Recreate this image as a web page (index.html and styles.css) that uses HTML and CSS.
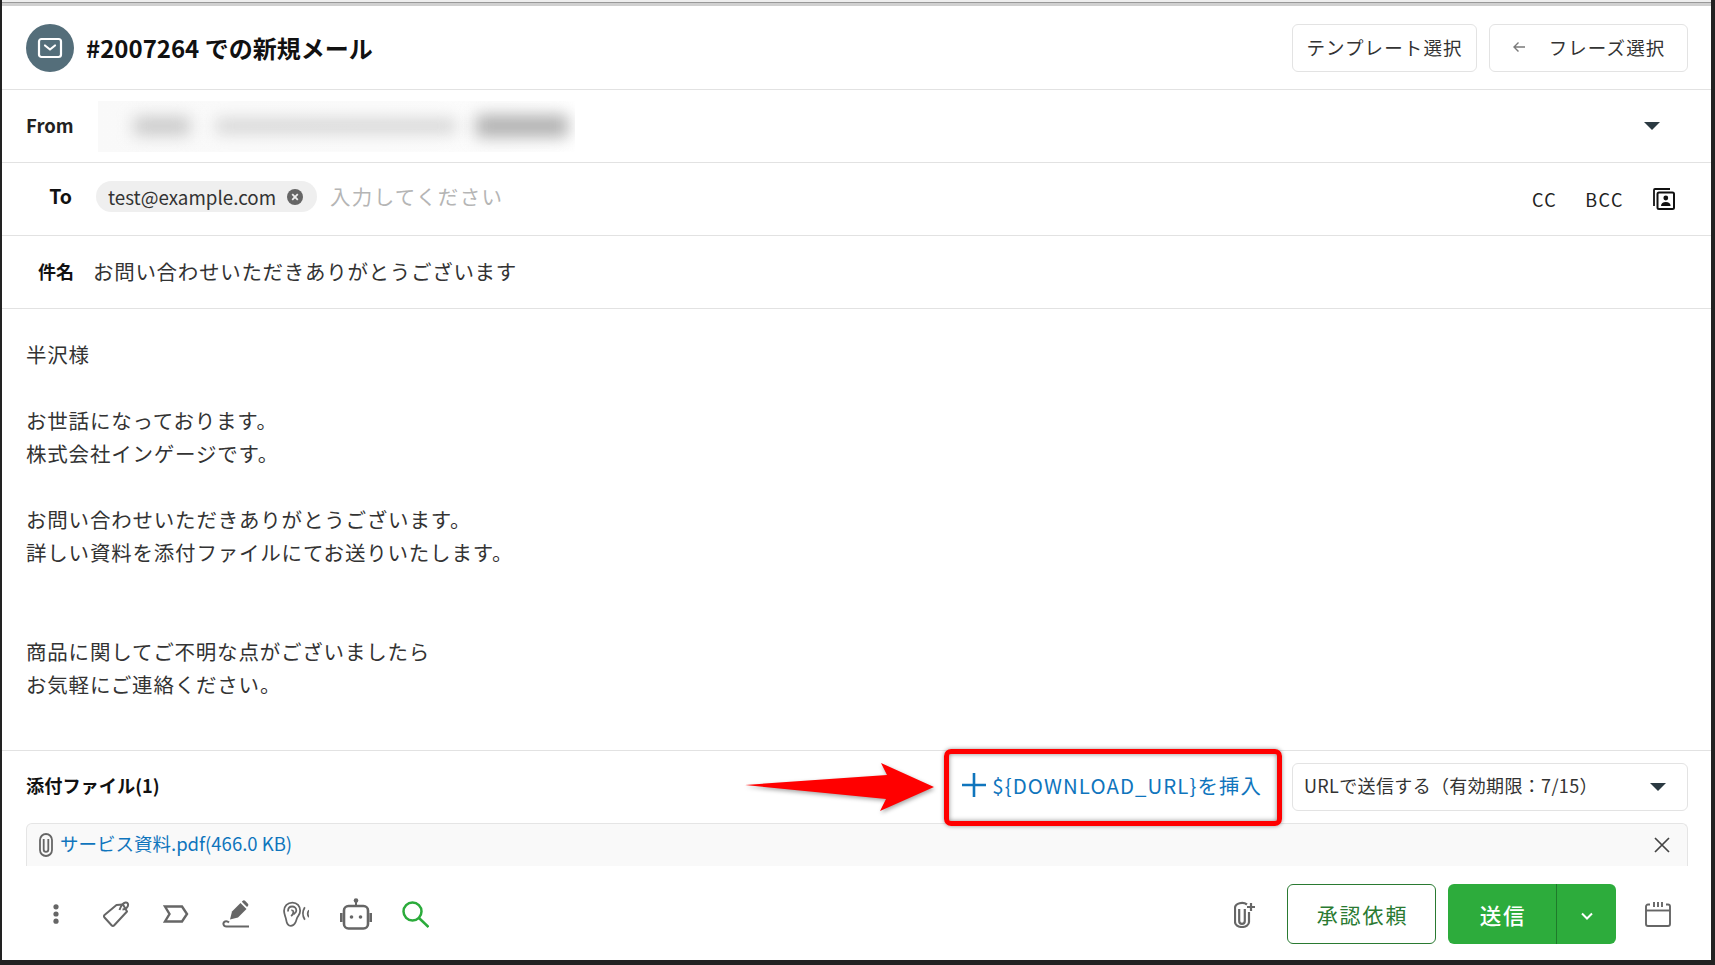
FILE: index.html
```html
<!DOCTYPE html>
<html lang="ja">
<head>
    <meta charset="UTF-8">
    <meta name="viewport" content="width=device-width, initial-scale=1.0">
    <title>新規メール</title>
    <link rel="stylesheet" href="styles.css">
</head>
<body>
    <div class="frame">
        <div class="top-strip"></div>

        <header class="head">
            <div class="head-title">
                <span class="avatar">
                    <svg width="26" height="22" viewBox="0 0 26 22" fill="none" stroke="#fff" stroke-width="2.2" stroke-linejoin="round" stroke-linecap="round">
                        <rect x="2" y="2" width="22" height="18" rx="2.5"/>
                        <path d="M8 8.5l5 4 5-4"/>
                    </svg>
                </span>
                <h1>#2007264 での新規メール</h1>
            </div>
            <div class="head-actions">
                <button class="btn btn-template" type="button"><span>テンプレート選択</span></button>
                <button class="btn btn-phrase" type="button">
                    <svg width="14" height="12" viewBox="0 0 14 12" fill="none" stroke="#7a7a7a" stroke-width="1.4">
                        <path d="M13 6H2M6.5 1.5L2 6l4.5 4.5"/>
                    </svg>
                    <span>フレーズ選択</span>
                </button>
            </div>
        </header>

        <div class="row row-from">
            <label class="row-label label-from">From</label>
            <div class="blurred">
                <span class="blob blob-a"></span>
                <span class="blob blob-b"></span>
                <span class="blob blob-c"></span>
            </div>
            <span class="caret caret-from"></span>
        </div>

        <div class="row row-to">
            <label class="row-label label-to">To</label>
            <span class="chip">
                test@example.com
                <svg width="16" height="16" viewBox="0 0 16 16">
                    <circle cx="8" cy="8" r="8" fill="#666"/>
                    <path d="M5.2 5.2l5.6 5.6M10.8 5.2l-5.6 5.6" stroke="#efefef" stroke-width="1.8"/>
                </svg>
            </span>
            <span class="placeholder">入力してください</span>
            <div class="to-links">
                <span class="to-cc">CC</span>
                <span class="to-bcc">BCC</span>
                <svg width="22" height="22" viewBox="0 0 22 22" fill="none" stroke="#111" stroke-width="1.8">
                    <path d="M1 18V2a1 1 0 0 1 1-1h15"/>
                    <rect x="4.5" y="4.5" width="16.5" height="16.5" rx="1.5" stroke-width="2"/>
                    <circle cx="12.8" cy="10" r="2.4" fill="#111" stroke="none"/>
                    <path d="M8 18c0-2.8 2-4 4.8-4s4.8 1.2 4.8 4z" fill="#111" stroke="none"/>
                </svg>
            </div>
        </div>

        <div class="row row-subject">
            <label class="row-label label-subject">件名</label>
            <span class="subject">お問い合わせいただきありがとうございます</span>
        </div>

        <div class="mail-body">
            <p>半沢様</p>
            <p>&nbsp;</p>
            <p>お世話になっております。</p>
            <p>株式会社インゲージです。</p>
            <p>&nbsp;</p>
            <p>お問い合わせいただきありがとうございます。</p>
            <p>詳しい資料を添付ファイルにてお送りいたします。</p>
            <p>&nbsp;</p>
            <p>&nbsp;</p>
            <p>商品に関してご不明な点がございましたら</p>
            <p>お気軽にご連絡ください。</p>
        </div>

        <div class="attach-row">
            <span class="attach-title">添付ファイル(1)</span>
            <button class="insert-btn" type="button">
                <svg width="24" height="24" viewBox="0 0 24 24" stroke="#0f75bd" stroke-width="2.6">
                    <path d="M12 0v24M0 12h24"/>
                </svg>
                <span>${DOWNLOAD_URL}を挿入</span>
            </button>
            <div class="url-select">
                <span class="url-text">URLで送信する（有効期限：7/15）</span>
                <span class="caret"></span>
            </div>

            <!-- annotation drawn over the screenshot -->
            <svg class="note-arrow" width="200" height="60" viewBox="0 0 200 60">
                <path d="M0 26L142 16L136 4L189 28L135 52L141 40z" fill="#ff0000"/>
            </svg>
            <div class="note-box"></div>
        </div>

        <div class="file-row">
            <svg class="clip" width="14" height="24" viewBox="0 0 14 24" fill="none" stroke="#666" stroke-width="1.8">
                <rect x="1" y="1" width="12" height="22" rx="6"/>
                <path d="M4.7 6v10.500a2.300 2.300 0 0 0 4.600 0V6"/>
            </svg>
            <a class="file-link">サービス資料.pdf(466.0 KB)</a>
            <svg class="file-close" width="16" height="16" viewBox="0 0 16 16" stroke="#444" stroke-width="1.7">
                <path d="M1 1l14 14M15 1L1 15"/>
            </svg>
        </div>

        <footer class="foot">
            <div class="tools">
                <span class="tool">
                    <svg width="6" height="20" viewBox="0 0 6 20" fill="#666">
                        <circle cx="3" cy="2.8" r="2.6"/><circle cx="3" cy="10" r="2.6"/><circle cx="3" cy="17.2" r="2.6"/>
                    </svg>
                </span>
                <span class="tool">
                    <svg width="27" height="27" viewBox="0 0 27 27" fill="none" stroke="#666" stroke-width="2" stroke-linejoin="round">
                        <path d="M1.500 14L13.500 4l6.500-.5 4 7L11 24.500a1.500 1.500 0 0 1-2.200 0L1.500 16.500a1.700 1.700 0 0 1 0-2.500z"/>
                        <path d="M16.500 9c1-3 3.500-7 6-7.500 2.500-.5 3.500 2.500 1.500 5-1 1-2.500 2-4.500 2"/>
                    </svg>
                </span>
                <span class="tool">
                    <svg width="26" height="20" viewBox="0 0 26 20" fill="none" stroke="#666" stroke-width="2.4">
                        <path d="M2 2.500h17l5 7.500-5 7.500H2L6.500 10z"/>
                    </svg>
                </span>
                <span class="tool">
                    <svg width="28" height="28" viewBox="0 0 28 28" fill="none">
                        <path d="M8 19.500l2-8L18.500 3l6 6-8.500 8.500z" fill="#666"/>
                        <path d="M19.800 1.700l.7-.7a2 2 0 0 1 2.800 0l2.400 2.400a2 2 0 0 1 0 2.800l-.7.700z" fill="#666"/>
                        <path d="M27 26.500H4.500C1 26.500.5 22.500 3 21.500c1.500-.5 3 0 4 1" stroke="#666" stroke-width="2"/>
                    </svg>
                </span>
                <span class="tool">
                    <svg width="26" height="27" viewBox="0 0 25 25" fill="none" stroke="#666" stroke-width="1.7">
                        <path d="M1 9C1 4.500 4.500 1 9 1s7.500 3.500 7.500 8c0 3-1.500 4.500-2.500 6-1 1.500-1 3-2 5-1 2-2.500 3.500-4.500 3.500-3 0-4-2.500-4.500-6C2.500 14.500 1 12.500 1 9z"/>
                        <path d="M4.800 9.500C4.800 6.500 6.500 4.800 8.800 4.800s4 1.800 4 4c0 2-1.800 2.500-2.800 3.500"/>
                        <path d="M7.800 14c1.200-1 2.200-2 2.200-4 0-1-1-1.800-2-1.500"/>
                        <path d="M21 5.500c-2.500 4-2.500 8 0 12"/>
                        <path d="M25 8.500c-1.500 2-1.500 4.500 0 6.500"/>
                    </svg>
                </span>
                <span class="tool">
                    <svg width="32" height="32" viewBox="0 0 32 32" fill="none">
                        <circle cx="16" cy="2.5" r="2.300" fill="#666"/>
                        <path d="M16 3v5" stroke="#666" stroke-width="2"/>
                        <rect x="4" y="8" width="24" height="22.500" rx="4.500" stroke="#666" stroke-width="2.600"/>
                        <path d="M1.300 15v9M30.700 15v9" stroke="#666" stroke-width="2.600"/>
                        <circle cx="11.500" cy="19" r="1.800" fill="#666"/>
                        <circle cx="20.500" cy="19" r="1.800" fill="#666"/>
                    </svg>
                </span>
                <span class="tool tool-search">
                    <svg width="27" height="27" viewBox="0 0 27 27" fill="none" stroke="#2bab3b" stroke-width="2.500">
                        <circle cx="10.500" cy="10.500" r="9"/>
                        <path d="M17 17l9.500 9"/>
                    </svg>
                </span>
            </div>

            <div class="send-area">
                <span class="tool">
                    <svg width="22" height="27" viewBox="0 0 22 27" fill="none" stroke="#666" stroke-width="2.200">
                        <path d="M15 11v10a7 5 0 0 1-14 0V6.500a7 5 0 0 1 12-3"/>
                        <path d="M5.200 8v12a2.800 2.800 0 0 0 5.600 0V8"/>
                        <path d="M17 2v8M13 6h8"/>
                    </svg>
                </span>
                <button class="btn-approve" type="button">承認依頼</button>
                <div class="send-group">
                    <button class="btn-send" type="button">送信</button>
                    <button class="btn-send-more" type="button">
                        <svg width="12" height="8" viewBox="0 0 12 8" fill="none" stroke="#fff" stroke-width="2">
                            <path d="M1 1.500l5 5 5-5"/>
                        </svg>
                    </button>
                </div>
                <span class="tool">
                    <svg width="26" height="26" viewBox="0 0 26 26" fill="none" stroke="#666" stroke-width="1.900">
                        <path d="M5 3.500H3a2 2 0 0 0-2 2V23a2 2 0 0 0 2 2h20a2 2 0 0 0 2-2V5.500a2 2 0 0 0-2-2h-2"/>
                        <path d="M1 9.500h24"/>
                        <path d="M9 1v5M13 1v5M17 1v5"/>
                    </svg>
                </span>
            </div>
        </footer>
    </div>
</body>
</html>
```

FILE: styles.css
```css
* {
    box-sizing: border-box;
}
html, body {
    margin: 0;
    height: 100%;
    background: #222;
}
body {
    font-family: "Noto Sans CJK JP", "Noto Sans", sans-serif;
    color: #333;
    overflow: hidden;
}
button {
    font-family: inherit;
    background: none;
    cursor: pointer;
}
.frame {
    height: 960px;
    margin-left: 2px;
    width: 1709px;
    background: #fff;
    display: flex;
    flex-direction: column;
}
.top-strip {
    height: 6px;
    background: #d0d0d0;
    border-top: 2px solid #eee;
    box-shadow: inset 0 1px 0 #999;
}

.head {
    height: 84px;
    border-bottom: 1px solid #e2e2e2;
    display: flex;
    align-items: center;
    justify-content: space-between;
    padding: 0 23px 0 24px;
}
.head-title {
    display: flex;
    align-items: center;
    gap: 12px;
}
.avatar {
    width: 48px;
    height: 48px;
    border-radius: 50%;
    background: #546e7a;
    display: flex;
    align-items: center;
    justify-content: center;
}
h1 {
    margin: 0;
    font-size: 24px;
    font-weight: 700;
    color: #111;
}
.head-actions {
    display: flex;
    gap: 12px;
}
.btn {
    height: 48px;
    border: 1px solid #e3e3e3;
    border-radius: 6px;
    padding: 0 0 2px;
    font-size: 18.5px;
    letter-spacing: 1.1px;
    color: #333;
    display: flex;
    align-items: center;
    justify-content: center;
}
.btn-template {
    width: 185px;
}
.btn-phrase {
    width: 199px;
    gap: 23px;
}

.row {
    height: 73px;
    border-bottom: 1px solid #e2e2e2;
    display: flex;
    align-items: center;
    padding: 0 23px 0 24px;
}
.row-label {
    width: 48px;
    text-align: right;
    font-size: 18px;
    font-weight: 700;
    color: #222;
}
.label-from {
    margin-bottom: 2px;
    padding-right: 1px;
    font-size: 18.5px;
}
.label-to {
    margin-bottom: 8px;
    padding-right: 2px;
    font-size: 19.5px;
    color: #111;
}
.label-subject {
    margin-bottom: 2px;
    color: #111;
}
.blurred {
    width: 477px;
    height: 51px;
    margin-left: 24px;
    overflow: hidden;
    display: flex;
    align-items: center;
    background: linear-gradient(to right, #f9f9f9, #fcfcfc 85%, #fff);
}
.blob {
    display: block;
    filter: blur(8px);
}
.blob-a {
    width: 56px;
    height: 18px;
    margin-left: 36px;
    background: #c8c8c8;
}
.blob-b {
    width: 240px;
    height: 14px;
    margin-left: 26px;
    background: #d2d2d2;
}
.blob-c {
    width: 92px;
    height: 22px;
    margin-left: 20px;
    background: #b0b0b0;
}
.caret {
    width: 0;
    height: 0;
    border-left: 8px solid transparent;
    border-right: 8px solid transparent;
    border-top: 8px solid #2b3a42;
}
.caret-from {
    margin-left: auto;
    margin-right: 28px;
}
.chip {
    height: 31px;
    margin-left: 22px;
    margin-bottom: 5px;
    padding: 0 14px 0 12px;
    border-radius: 16px;
    background: #efefef;
    display: flex;
    align-items: center;
    gap: 11px;
    font-size: 18.8px;
    color: #333;
}
.placeholder {
    margin-left: 13px;
    margin-bottom: 6px;
    font-size: 20.5px;
    letter-spacing: 1.3px;
    color: #b5b5b5;
}
.to-links {
    margin-left: auto;
    display: flex;
    align-items: center;
    font-size: 18px;
    letter-spacing: 1.5px;
    color: #222;
    padding-right: 13px;
}
.to-bcc {
    margin-left: 28px;
    margin-right: 29px;
}
.subject {
    margin-left: 19px;
    margin-bottom: 2px;
    font-size: 20.5px;
    letter-spacing: .7px;
}

.mail-body {
    height: 442px;
    border-bottom: 1px solid #e2e2e2;
    padding: 29px 24px 0;
    font-size: 20.5px;
    letter-spacing: .8px;
    line-height: 33px;
}
.mail-body p {
    margin: 0;
}

.attach-row {
    position: relative;
    height: 72px;
    display: flex;
    align-items: center;
    padding: 0 23px 0 24px;
}
.attach-title {
    margin-bottom: 5px;
    font-size: 18.2px;
    font-weight: 700;
    color: #111;
}
.insert-btn {
    margin-left: auto;
    margin-right: 30px;
    margin-bottom: 5px;
    border: none;
    padding: 0;
    display: flex;
    align-items: center;
    gap: 6px;
    font-size: 20.4px;
    letter-spacing: 1.1px;
    color: #0f75bd;
}
.url-select {
    width: 396px;
    height: 48px;
    border: 1px solid #e3e3e3;
    border-radius: 6px;
    display: flex;
    align-items: center;
    justify-content: space-between;
    padding: 0 21px 0 11px;
    font-size: 18px;
    letter-spacing: .35px;
}
.url-text {
    margin-bottom: 5px;
}
.note-arrow {
    position: absolute;
    left: 743px;
    top: 8px;
    filter: drop-shadow(1px 2px 2px rgba(0, 0, 0, .35));
}
.note-box {
    position: absolute;
    left: 942px;
    top: -2px;
    width: 338px;
    height: 77px;
    border: 5px solid #ff0000;
    border-radius: 7px;
    box-shadow: 0 0 4px rgba(0, 0, 0, .4), inset 0 0 5px rgba(0, 0, 0, .45);
}

.file-row {
    height: 43px;
    margin: 0 23px 0 24px;
    border: 1px solid #e5e5e5;
    border-bottom: none;
    border-radius: 6px 6px 0 0;
    background: #f9f9f9;
    display: flex;
    align-items: center;
    padding: 0 17px 0 12px;
}
.clip {
    margin-right: 7px;
}
.file-link {
    margin-bottom: 5px;
    font-size: 18.5px;
    color: #0f75bd;
}
.file-close {
    margin-left: auto;
}

.foot {
    height: 94px;
    display: flex;
    align-items: center;
    justify-content: space-between;
    padding: 2px 23px 0 24px;
}
.tools {
    display: flex;
}
.tool {
    width: 60px;
    display: flex;
    align-items: center;
    justify-content: center;
}
.tool-search {
    padding-right: 2px;
}
.send-area {
    display: flex;
    align-items: center;
    gap: 12px;
}
.btn-approve {
    width: 149px;
    height: 60px;
    border: 1px solid #2a7a32;
    border-radius: 6px;
    padding-left: 8px;
    font-size: 21px;
    letter-spacing: 1.9px;
    color: #2a7a32;
}
.send-group {
    display: flex;
    height: 60px;
    width: 168px;
    border-radius: 6px;
    overflow: hidden;
    background: #2dac3c;
}
.btn-send {
    width: 109px;
    border: none;
    border-right: 1px solid #1f7a2b;
    padding-left: 8px;
    font-size: 21.5px;
    font-weight: 500;
    letter-spacing: 1.8px;
    color: #fff;
}
.btn-send-more {
    flex: 1;
    border: none;
}
```
